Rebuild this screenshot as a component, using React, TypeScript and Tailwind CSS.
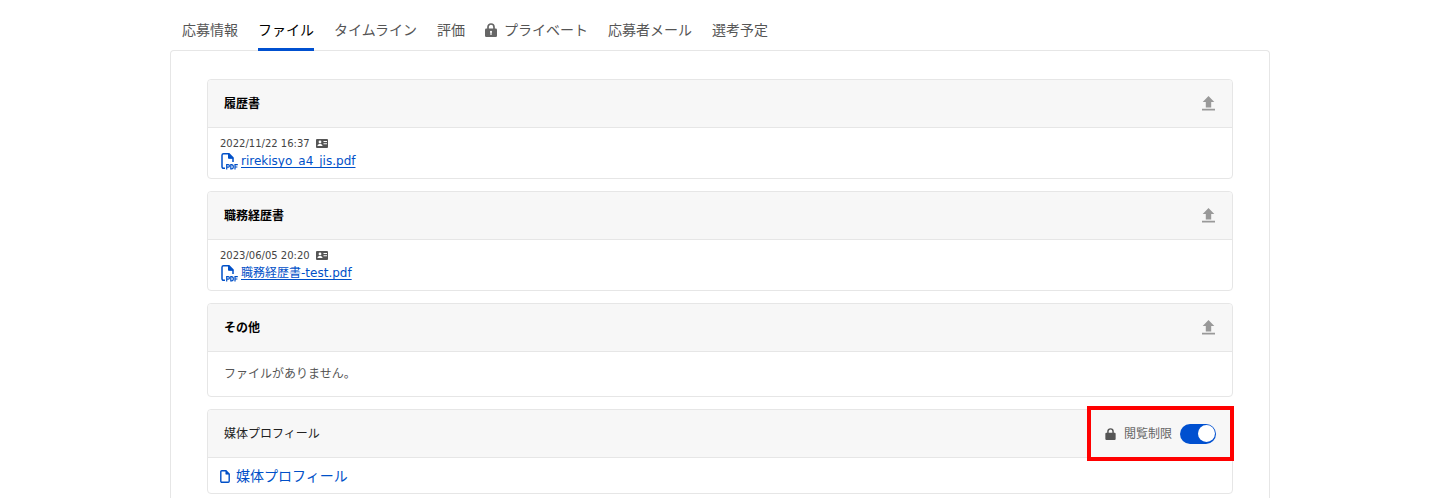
import { useState } from 'react';
import type { ReactNode } from 'react';

const TABS = [
  { label: '応募情報' },
  { label: 'ファイル' },
  { label: 'タイムライン' },
  { label: '評価' },
  { label: 'プライベート', locked: true },
  { label: '応募者メール' },
  { label: '選考予定' },
];

function LockIcon({ keyhole, className }: { keyhole?: boolean; className: string }) {
  return (
    <svg viewBox="0 0 12 14" className={className} aria-hidden="true">
      <path d="M3 6.5V4a3 3 0 0 1 6 0v2.5" fill="none" stroke="currentColor" strokeWidth="1.7" />
      <rect x="0" y="5.5" width="12" height="8.5" rx="1.2" fill="currentColor" />
      {keyhole && <path d="M6 7.8a1.1 1.1 0 0 1 .6 2V12H5.4V9.8a1.1 1.1 0 0 1 .6-2Z" fill="#fff" />}
    </svg>
  );
}

function UploadIcon() {
  return (
    <svg viewBox="0 0 13 15" className="h-[15px] w-[13px] fill-current" aria-hidden="true">
      <path d="M6.5 0 12.3 6H9.2v5.5H3.8V6H.7ZM0 12.8h13v1.7H0Z" />
    </svg>
  );
}

function CardIcon() {
  return (
    <svg viewBox="0 0 12 9" className="h-[9px] w-3" aria-hidden="true">
      <rect width="12" height="9" rx="1" fill="#555" />
      <circle cx="4" cy="3" r="1.4" fill="#fff" />
      <path d="M1.5 7c0-2.6 5-2.6 5 0ZM7.5 2H11v1H7.5ZM7.5 4.2H11v1H7.5Z" fill="#fff" />
    </svg>
  );
}

function PdfIcon() {
  return (
    <svg viewBox="0 0 17 17" className="h-[17px] w-[17px] shrink-0" fill="none" stroke="currentColor" aria-hidden="true">
      <path d="M4 15.3H2.5A1.5 1.5 0 0 1 1 13.8V2.2A1.5 1.5 0 0 1 2.5.8H8l4 4V9" strokeWidth="1.5" />
      <path d="M7.5.8V5.3H12Z" fill="currentColor" />
      <path
        d="M5.7 16.5V11.7H7.3Q8.4 11.7 8.4 12.9T7.3 14.2H5.7M9.8 11.7V15.9H10.6Q12.3 15.9 12.3 13.8T10.6 11.7ZM14 16.5V11.7H16.8M14 14H16.4"
        strokeWidth="1.2"
      />
    </svg>
  );
}

function FileIcon() {
  return (
    <svg viewBox="0 0 10 13" className="h-[13px] w-[10px] shrink-0" fill="none" stroke="currentColor" aria-hidden="true">
      <path d="M1.8.8H6L9.2 4V11.2a1 1 0 0 1-1 1H1.8a1 1 0 0 1-1-1V1.8a1 1 0 0 1 1-1Z" strokeWidth="1.4" />
      <path d="M5.8.8V4.2H9.2Z" fill="currentColor" strokeWidth="0.6" />
    </svg>
  );
}

function Section({
  title,
  plain,
  action,
  children,
}: {
  title: string;
  plain?: boolean;
  action?: ReactNode;
  children: ReactNode;
}) {
  return (
    <section className="rounded border border-[#e6e6e6]">
      <header className="flex h-12 items-center justify-between rounded-t border-b border-[#e6e6e6] bg-[#f7f7f7] px-4">
        <h2 className={plain ? 'text-xs text-[#222]' : 'text-xs font-bold text-black'}>{title}</h2>
        {action ?? (
          <button type="button" aria-label={`${title}をアップロード`} className="mr-px text-[#999] hover:text-[#666]">
            <UploadIcon />
          </button>
        )}
      </header>
      {children}
    </section>
  );
}

function FileRow({ date, name }: { date: string; name: string }) {
  return (
    <div className="px-3 py-[7px]">
      <div className="flex h-4 items-center gap-1.5 text-[10px] text-[#444]">
        <time>{date}</time>
        <CardIcon />
      </div>
      <a href="#file" className="flex h-5 items-center gap-[3px] pl-px text-xs text-[#0050c8]">
        <PdfIcon />
        <span className="underline underline-offset-2">{name}</span>
      </a>
    </div>
  );
}

export default function App() {
  const [active, setActive] = useState('ファイル');
  const [restricted, setRestricted] = useState(true);

  return (
    <main className="mx-auto max-w-[1100px] bg-white pt-3 font-['DejaVu_Sans','Noto_Sans_CJK_JP',sans-serif]">
      <nav className="relative flex gap-5 px-3">
        {TABS.map((t) => (
          <button
            key={t.label}
            type="button"
            onClick={() => setActive(t.label)}
            className={
              '-mb-px flex h-[39px] items-center gap-1 border-b-3 text-sm whitespace-nowrap ' +
              (t.label === active ? 'border-[#0050d0] text-black' : 'border-transparent text-[#555]')
            }
          >
            {t.locked && <LockIcon keyhole className="mr-[3px] h-3.5 w-3 text-[#666]" />}
            {t.label}
          </button>
        ))}
      </nav>
      <div className="flex flex-col gap-3 rounded-t border border-b-0 border-[#e6e6e6] px-9 pt-7 pb-1">
        <Section title="履歴書">
          <FileRow date="2022/11/22 16:37" name="rirekisyo_a4_jis.pdf" />
        </Section>
        <Section title="職務経歴書">
          <FileRow date="2023/06/05 20:20" name="職務経歴書-test.pdf" />
        </Section>
        <Section title="その他">
          <p className="px-4 py-3 text-xs leading-5 text-[#555]">ファイルがありません。</p>
        </Section>
        <Section
          title="媒体プロフィール"
          plain
          action={
            <div className="relative flex h-5 items-center">
              <label className="flex cursor-pointer items-center text-xs text-[#666]">
                <LockIcon className="mr-2 h-3 w-[11px] text-[#555]" />
                閲覧制限
                <input
                  type="checkbox"
                  role="switch"
                  checked={restricted}
                  onChange={(e) => setRestricted(e.target.checked)}
                  className="peer sr-only"
                />
                <span className="ml-2 flex h-5 w-9 items-center rounded-full bg-[#aaa] px-px peer-checked:justify-end peer-checked:bg-[#0050d0]">
                  <span className="size-[17px] rounded-full bg-white" />
                </span>
              </label>
              <span className="pointer-events-none absolute -inset-x-[18px] -top-[18px] -bottom-[17px] border-4 border-[#f00]" />
            </div>
          }
        >
          <a href="#profile" className="flex items-center gap-1.5 px-3 pt-2 pb-[7px] text-sm leading-5 text-[#0050c8]">
            <FileIcon />
            媒体プロフィール
          </a>
        </Section>
      </div>
    </main>
  );
}
